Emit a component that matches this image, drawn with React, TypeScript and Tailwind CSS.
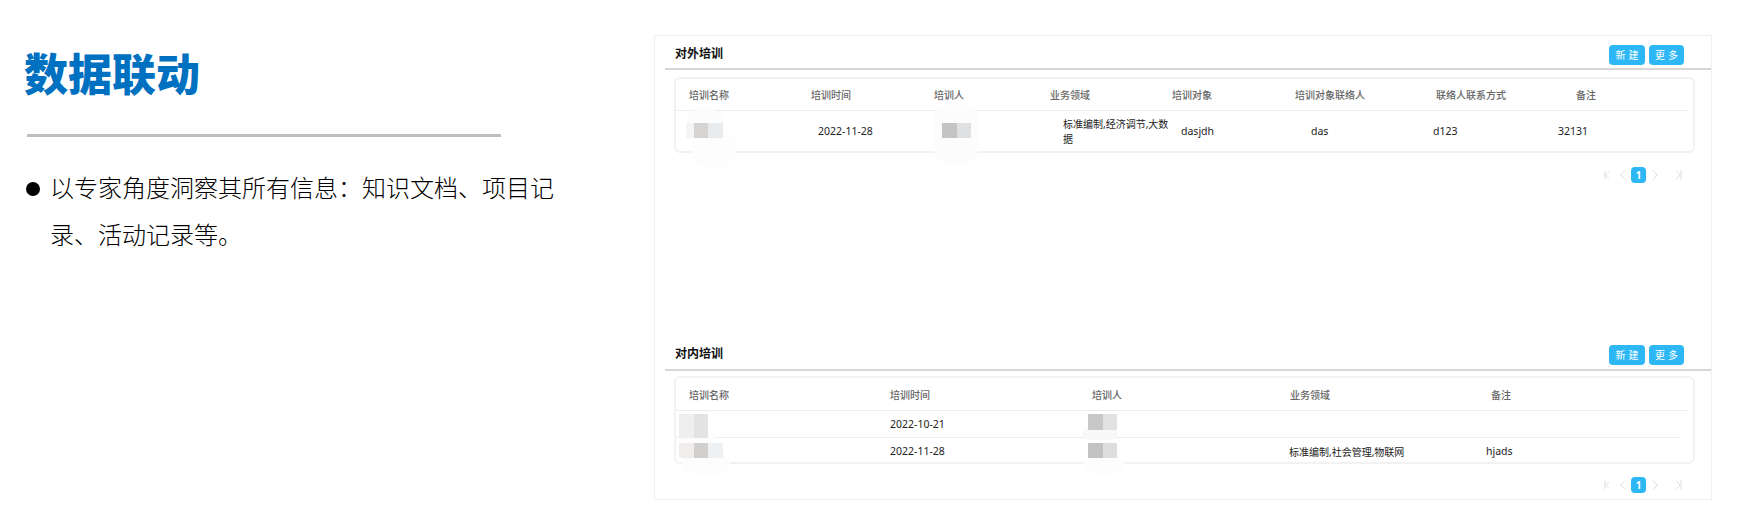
const cjk = "font-['Noto_Sans','Noto_Sans_CJK_SC',sans-serif]";

function PagerIcon({ type }: { type: "first" | "prev" | "next" | "last" }) {
  const paths = {
    first: "M1 0.5V9.5M6 0.5L1.8 5L6 9.5",
    prev: "M5 0.5L0.8 5L5 9.5",
    next: "M1 0.5L5.2 5L1 9.5",
    last: "M5 0.5V9.5M0 0.5L4.2 5L0 9.5",
  };
  return (
    <svg width="6" height="10" viewBox="0 0 6 10" fill="none" stroke="#dcdcdc" strokeWidth="1">
      <path d={paths[type]} />
    </svg>
  );
}

function Pager({ className }: { className: string }) {
  return (
    <div className={`ml-[949px] flex w-[78px] items-center ${className}`}>
      <PagerIcon type="first" />
      <div className="ml-[11px]">
        <PagerIcon type="prev" />
      </div>
      <div className="ml-[5px] flex h-4 w-4 items-center justify-center rounded-[4px] bg-[#2db7f5] text-[10px] font-bold text-white">
        1
      </div>
      <div className="ml-[6px]">
        <PagerIcon type="next" />
      </div>
      <div className="ml-[18px]">
        <PagerIcon type="last" />
      </div>
    </div>
  );
}

function SectionHeader({ title, height }: { title: string; height: string }) {
  return (
    <div className={`ml-[10px] flex justify-between border-b-2 border-[#d6d6d6] pl-[10px] pr-[27px] ${height}`}>
      <span className="mt-[9px] text-[12px] leading-[18px] font-bold text-[#111]">{title}</span>
      <div className="mt-[9px] flex gap-1">
        <button className="h-[20px] w-9 rounded-[4px] bg-[#2db7f5] pl-[3px] text-[10px] tracking-[3px] text-white">新建</button>
        <button className="h-[20px] w-[35px] rounded-[4px] bg-[#2db7f5] pl-[3px] text-[10px] tracking-[3px] text-white">更多</button>
      </div>
    </div>
  );
}

function Mosaic({ colors, className }: { colors: string[]; className: string }) {
  return (
    <div className={`absolute flex ${className}`}>
      {colors.map((c, i) => (
        <div key={i} className={c} />
      ))}
    </div>
  );
}

// faint smudge left round the mosaics
function Smudge({ className }: { className: string }) {
  return <div className={`absolute rounded-[14px] ${className}`} />;
}

export default function App() {
  return (
    <div className={`flex h-[513px] w-[1759px] overflow-hidden bg-white ${cjk}`}>
      {/* left intro */}
      <div className="w-[654px] shrink-0 pl-[23px] pt-[46px]">
        <h1 className="ml-px text-[44px] leading-[56px] font-black text-[#0070c0]">数据联动</h1>
        <div className="ml-[4px] mt-[32px] h-[3px] w-[474px] bg-[#bfbfbf]" />
        <div className="ml-[3px] mt-[27px] flex">
          <div className="mt-[18px] h-[14px] w-[14px] shrink-0 rounded-full bg-black" />
          <p className="ml-[10px] w-[510px] text-[24px] leading-[47px] font-light text-black">
            {"以专家角度洞察其所有信息\uFF1A知识文档、项目记录、活动记录等。"}
          </p>
        </div>
      </div>

      {/* right panel */}
      <div className="mt-[35px] h-[465px] w-[1058px] shrink-0 border border-[#f0f0f0]">
        <section className="h-[300px]">
          <SectionHeader title="对外培训" height="h-[34px]" />
          <div className="ml-[19px] mt-[7px] h-[76px] w-[1021px] rounded-md border-2 border-[#f2f2f2]">
            <div className="mr-[6px] grid h-[32px] grid-cols-[122px_122px_117px_122px_123px_138px_125px_1fr] items-center border-b border-[#ececec] pl-[13px] pt-px text-[10px] font-medium text-[#666]">
              <span>培训名称</span>
              <span>培训时间</span>
              <span className="pl-px">培训人</span>
              <span>业务领域</span>
              <span>培训对象</span>
              <span>培训对象联络人</span>
              <span className="pl-[3px]">联络人联系方式</span>
              <span className="pl-[18px]">备注</span>
            </div>
            <div className="grid h-[40px] grid-cols-[122px_122px_117px_122px_123px_138px_125px_1fr] items-center pl-[13px] pt-px text-[10.5px] leading-[15px] text-[#222]">
              <div className="relative h-full">
                <Smudge className="left-[-3px] top-[-3px] h-[34px] w-[37px] bg-[#fcfcfc]" />
                <Smudge className="left-[3px] top-[20px] h-[35px] w-[44px] bg-[#fdfdfd]" />
                <Mosaic
                  colors={["w-[8px] bg-[#f5f5f5]", "w-[14px] bg-[#d6d3d3]", "w-[15px] bg-[#e9ecee]"]}
                  className="left-[-3px] top-[11px] h-[15px]"
                />
              </div>
              <span className="pl-[7px]">2022-11-28</span>
              <div className="relative h-full">
                <Smudge className="left-px top-[-7px] h-[58px] w-[44px] bg-[#fcfcfc]" />
                <Mosaic
                  colors={["w-[15px] bg-[#c4c4c4]", "w-[14px] bg-[#dee0e1]"]}
                  className="left-[9px] top-[11px] h-[15px]"
                />
              </div>
              <span className="w-[122px] pl-[13px] text-[10px]">标准编制,经济调节,大数据</span>
              <span className="pl-[9px]">dasjdh</span>
              <span className="pl-[16px]">das</span>
              <span>d123</span>
              <span>32131</span>
            </div>
          </div>
          <Pager className="mt-[14px]" />
        </section>

        <section>
          <SectionHeader title="对内培训" height="h-[35px]" />
          <div className="ml-[19px] mt-[5px] h-[88px] w-[1021px] rounded-md border-2 border-[#f2f2f2]">
            <div className="mr-[6px] grid h-[33px] grid-cols-[201px_202px_197px_197px_1fr] items-center border-b border-[#ececec] pl-[13px] pt-[2px] text-[10px] font-medium text-[#666]">
              <span>培训名称</span>
              <span>培训时间</span>
              <span>培训人</span>
              <span className="pl-px">业务领域</span>
              <span className="pl-[5px]">备注</span>
            </div>
            <div className="mr-[12px] grid h-[27px] grid-cols-[201px_202px_197px_197px_1fr] items-center border-b border-[#ececec] pl-[13px] pt-px text-[10.5px] text-[#222]">
              <div className="relative h-full">
                <Smudge className="left-[-10px] top-[20px] h-[14px] w-[37px] bg-[#fcfcfc]" />
                <Mosaic
                  colors={["w-[15px] bg-[#efefef]", "w-[14px] bg-[#e3e3e3]"]}
                  className="left-[-10px] top-[2px] h-[24px]"
                />
              </div>
              <span>2022-10-21</span>
              <div className="relative h-full">
                <Smudge className="left-[-10px] top-[16px] h-[12px] w-[36px] bg-[#f9f9f9]" />
                <Mosaic
                  colors={["w-[15px] bg-[#c8c8c8]", "w-[14px] bg-[#e2e2e2]"]}
                  className="left-[-4px] top-[2px] h-[16px]"
                />
              </div>
              <span />
              <span />
            </div>
            <div className="grid h-[25px] grid-cols-[201px_202px_197px_197px_1fr] items-center pl-[13px] pt-[3px] text-[10.5px] text-[#222]">
              <div className="relative h-full">
                <Smudge className="left-[-7px] top-[14px] h-[19px] w-[48px] bg-[#fdfdfd]" />
                <Mosaic
                  colors={["w-[15px] bg-[#f2eded]", "w-[14px] bg-[#d2d0ce]", "w-[15px] bg-[#edf1f4]"]}
                  className="left-[-10px] top-[2px] h-[15px]"
                />
              </div>
              <span>2022-11-28</span>
              <div className="relative h-full">
                <Smudge className="left-[-9px] top-[14px] h-[19px] w-[42px] bg-[#fdfdfd]" />
                <Mosaic
                  colors={["w-[15px] bg-[#c2c2c2]", "w-[14px] bg-[#dedede]"]}
                  className="left-[-4px] top-[2px] h-[15px]"
                />
              </div>
              <span className="text-[10px]">标准编制,社会管理,物联网</span>
              <span>hjads</span>
            </div>
          </div>
          <Pager className="mt-[13px]" />
        </section>
      </div>
    </div>
  );
}
